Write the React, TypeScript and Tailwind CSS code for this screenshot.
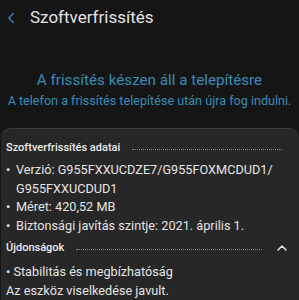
import { ChevronLeft, ChevronUp } from 'lucide-react';

const font = { fontFamily: 'Roboto, "Noto Sans", sans-serif' };

function SectionTitle({ title, chevron }: { title: string; chevron?: boolean }) {
  return (
    <div className="flex items-center h-[20px]">
      <span className="text-[11px] font-medium text-[#ececec] whitespace-nowrap">{title}</span>
      <div className="flex-1 mx-[12px] mt-[3px] border-t border-dotted border-[#8a8a8a]" />
      {chevron && <ChevronUp className="w-[16px] h-[16px] text-[#e6e6e6] mr-[4px]" strokeWidth={2.2} />}
    </div>
  );
}

export default function App() {
  return (
    <div className="w-[299px] h-[300px] bg-[#161515] flex flex-col overflow-hidden" style={font}>
      {/* Header */}
      <div className="flex items-center h-[36px] pl-[2px]">
        <ChevronLeft className="w-[18px] h-[18px] text-[#3a7fb0]" strokeWidth={2} />
        <span className="ml-[10px] text-[17px] text-[#e2e2e2]">Szoftverfrissítés</span>
      </div>

      {/* Status */}
      <div className="flex flex-col items-center mt-[34px] text-[#3a8cb7]">
        <div className="text-[15.2px] leading-[20px]">A frissítés készen áll a telepítésre</div>
        <div className="text-[12.6px] leading-[18px] mt-[2px] whitespace-nowrap">A telefon a frissítés telepítése után újra fog indulni.</div>
      </div>

      {/* Details card */}
      <div className="mt-[18px] ml-[1px] flex-1 bg-[#272727] rounded-t-[10px] border-t border-[#3c3c3c] px-[5px] pt-[9px] text-[#e4e4e4]">
        <SectionTitle title="Szoftverfrissítés adatai" />
        <div className="text-[12.7px] leading-[18.5px] mt-[3px] whitespace-nowrap">
          <div className="flex">
            <span className="w-[10px]">•</span>
            <span>Verzió: G955FXXUCDZE7/G955FOXMCDUD1/<br />G955FXXUCDUD1</span>
          </div>
          <div className="flex">
            <span className="w-[10px]">•</span>
            <span>Méret: 420,52 MB</span>
          </div>
          <div className="flex">
            <span className="w-[10px]">•</span>
            <span>Biztonsági javítás szintje: 2021. április 1.</span>
          </div>
        </div>
        <div className="mt-[3px]">
          <SectionTitle title="Újdonságok" chevron />
        </div>
        <div className="text-[12.7px] leading-[18.5px] mt-[5px]">
          <div>• Stabilitás és megbízhatóság</div>
          <div>Az eszköz viselkedése javult.</div>
        </div>
      </div>
    </div>
  );
}
